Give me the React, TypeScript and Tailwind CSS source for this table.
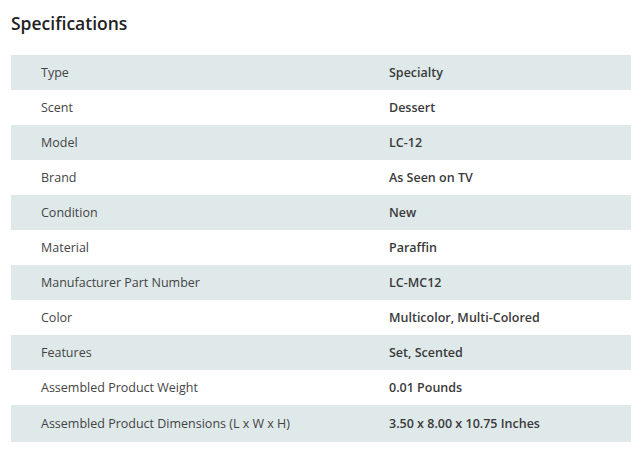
const SPECS = [
  ["Type", "Specialty"],
  ["Scent", "Dessert"],
  ["Model", "LC-12"],
  ["Brand", "As Seen on TV"],
  ["Condition", "New"],
  ["Material", "Paraffin"],
  ["Manufacturer Part Number", "LC-MC12"],
  ["Color", "Multicolor, Multi-Colored"],
  ["Features", "Set, Scented"],
  ["Assembled Product Weight", "0.01 Pounds"],
  ["Assembled Product Dimensions (L x W x H)", "3.50 x 8.00 x 10.75 Inches"],
]

export default function App() {
  return (
    <div
      className="min-h-screen bg-white px-[11px] pt-[10px]"
      style={{ fontFamily: '"Open Sans", "Noto Sans", sans-serif' }}
    >
      {/* Header */}
      <h2 className="text-[17.5px] font-semibold leading-[27px] text-[#222]">Specifications</h2>

      {/* Table */}
      <div className="mt-[18px] w-[620px]">
        {SPECS.map(([label, value], index) => (
          <div
            key={label}
            className={`flex items-center pt-[2px] text-[12.5px] ${index === SPECS.length - 1 ? "h-[37px]" : "h-[35px]"} ${index % 2 === 0 ? "bg-[#dfe9ea]" : "bg-white"}`}
          >
            <div className="w-[378px] pl-[30px] text-[#444]">{label}</div>
            <div className="flex-1 font-semibold text-[#3a3a3a]">{value}</div>
          </div>
        ))}
      </div>
    </div>
  )
}
